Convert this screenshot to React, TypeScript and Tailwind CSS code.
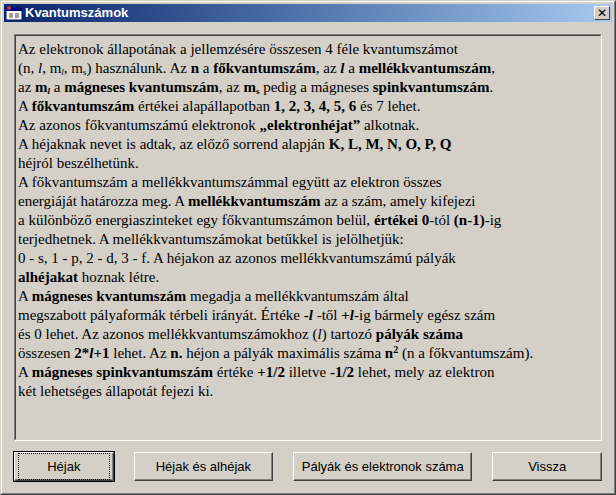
export default function App() {
  const btn = "h-[29px] bg-[#d4d0c8] border border-t-white border-l-white border-r-[#404040] border-b-[#404040] shadow-[inset_-1px_-1px_0_#808080] text-[13px] text-black flex items-center justify-center";
  const L = (c: React.ReactNode, k: number) => <div key={k} className="h-[19px] whitespace-nowrap">{c}</div>;
  const lines: React.ReactNode[] = [
    <>Az elektronok állapotának a jellemzésére összesen 4 féle kvantumszámot</>,
    <>(n, <i>l</i>, m<sub className="text-[9px]"><i>l</i></sub>, m<sub className="text-[9px]">s</sub>) használunk. Az <b>n</b> a <b>főkvantumszám</b>, az <b><i>l</i></b> a <b>mellékkvantumszám</b>,</>,
    <>az <b>m<sub className="text-[9px]"><i>l</i></sub></b> a <b>mágneses kvantumszám</b>, az <b>m<sub className="text-[9px]">s</sub></b> pedig a mágneses <b>spinkvantumszám</b>.</>,
    <>A <b>főkvantumszám</b> értékei alapállapotban <b>1, 2, 3, 4, 5, 6</b> és 7 lehet.</>,
    <>Az azonos főkvantumszámú elektronok <b>„elektronhéjat”</b> alkotnak.</>,
    <>A héjaknak nevet is adtak, az előző sorrend alapján <b>K, L, M, N, O, P, Q</b></>,
    <>héjról beszélhetünk.</>,
    <>A főkvantumszám a mellékkvantumszámmal együtt az elektron összes</>,
    <>energiáját határozza meg. A <b>mellékkvantumszám</b> az a szám, amely kifejezi</>,
    <>a különböző energiaszinteket egy főkvantumszámon belül, <b>értékei 0</b>-tól <b>(n-1)</b>-ig</>,
    <>terjedhetnek. A mellékkvantumszámokat betűkkel is jelölhetjük:</>,
    <>0 - s, 1 - p, 2 - d, 3 - f. A héjakon az azonos mellékkvantumszámú pályák</>,
    <><b>alhéjakat</b> hoznak létre.</>,
    <>A <b>mágneses kvantumszám</b> megadja a mellékkvantumszám által</>,
    <>megszabott pályaformák térbeli irányát. Értéke <b>-<i>l</i></b> -től <b>+<i>l</i></b>-ig bármely egész szám</>,
    <>és 0 lehet. Az azonos mellékkvantumszámokhoz (<i>l</i>) tartozó <b>pályák száma</b></>,
    <>összesen <b>2*<i>l</i>+1</b> lehet. Az <b>n.</b> héjon a pályák maximális száma <b>n<sup className="text-[10px]">2</sup></b> (n a főkvantumszám).</>,
    <>A <b>mágneses spinkvantumszám</b> értéke <b>+1/2</b> illetve <b>-1/2</b> lehet, mely az elektron</>,
    <>két lehetséges állapotát fejezi ki.</>,
  ];
  return (
    <div className="w-[616px] h-[495px] bg-[#d4d0c8] border border-t-[#d4d0c8] border-l-[#d4d0c8] border-r-[#404040] border-b-[#404040] flex flex-col" style={{ fontFamily: '"Liberation Sans", Arial, sans-serif' }}>
      <div className="border border-t-white border-l-white border-r-[#808080] border-b-[#808080] flex-1 flex flex-col p-[2px]">
        <div className="h-[18px] bg-gradient-to-r from-[#0a246a] to-[#a6caf0] flex items-center pl-[2px] pr-[2px]">
          <svg width="16" height="14" viewBox="0 0 16 14" className="mr-[3px]">
            <rect x="0" y="2" width="16" height="12" fill="#fff" stroke="#000080" strokeWidth="1" />
            <rect x="0" y="2" width="16" height="3" fill="#000080" />
            <circle cx="3" cy="2" r="2" fill="#c04040" />
            <rect x="3" y="7" width="4" height="5" fill="#a0a0a0" />
            <rect x="9" y="7" width="4" height="5" fill="#a0a0a0" />
          </svg>
          <span className="text-white font-bold text-[13px] flex-1">Kvantumszámok</span>
          <div className="w-[16px] h-[14px] bg-[#d4d0c8] border border-t-white border-l-white border-r-[#404040] border-b-[#404040] flex items-center justify-center text-[12px] leading-none text-black">✕</div>
        </div>
        <div className="flex-1 flex flex-col px-[10px] pt-[12px] pb-[10px]">
          <div className="h-[407px] border border-t-[#808080] border-l-[#808080] border-r-white border-b-white">
            <div className="h-full border border-t-[#404040] border-l-[#404040] border-r-[#d4d0c8] border-b-[#d4d0c8] pl-[2px] pt-[2px] text-[15px] text-black" style={{ fontFamily: '"Liberation Serif", "Times New Roman", serif' }}>
              {lines.map(L)}
            </div>
          </div>
          <div className="flex mt-[11px] gap-0">
            <div className={btn + " w-[100px] outline outline-1 outline-black"}><span className="border border-dotted border-black px-[28px] py-[3px] w-[92px] text-center">Héjak</span></div>
            <div className={btn + " w-[140px] ml-[20px]"}>Héjak és alhéjak</div>
            <div className={btn + " w-[180px] ml-[20px]"}>Pályák és elektronok száma</div>
            <div className={btn + " w-[110px] ml-[20px]"}>Vissza</div>
          </div>
        </div>
      </div>
    </div>
  );
}
